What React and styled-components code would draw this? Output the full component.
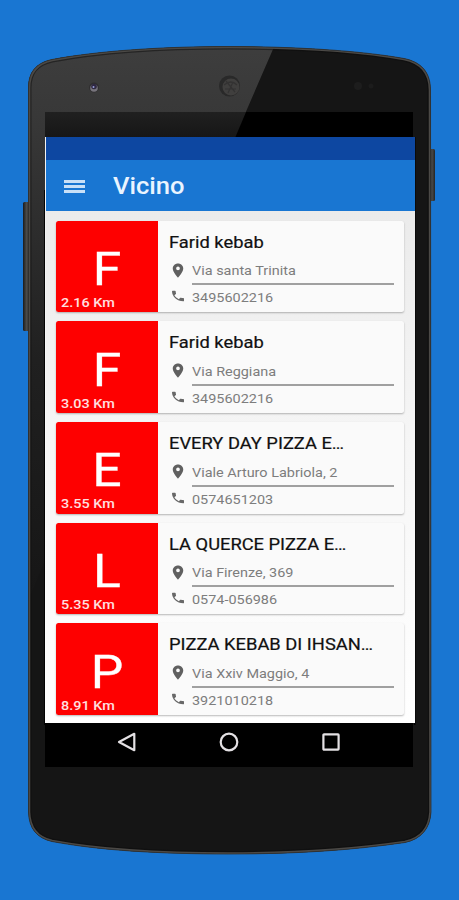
import React from 'react'
import styled, { createGlobalStyle } from 'styled-components'

const places = [
  { letter: 'F', distance: '2.16 Km', name: 'Farid kebab', address: 'Via santa Trinita', phone: '3495602216' },
  { letter: 'F', distance: '3.03 Km', name: 'Farid kebab', address: 'Via Reggiana', phone: '3495602216' },
  { letter: 'E', distance: '3.55 Km', name: 'EVERY DAY PIZZA E…', address: 'Viale Arturo Labriola, 2', phone: '0574651203' },
  { letter: 'L', distance: '5.35 Km', name: 'LA QUERCE PIZZA E…', address: 'Via Firenze, 369', phone: '0574-056986' },
  { letter: 'P', distance: '8.91 Km', name: 'PIZZA KEBAB DI IHSAN…', address: 'Via Xxiv Maggio, 4', phone: '3921010218' },
]

const bodyPath =
  'M28.5 88 C28.5 72 36 63 52 59.5 C100 50.5 165 46.5 229 46.5 C293 46.5 360 50.5 404 58.5 C421 62 430.5 72 430.5 90 L431 812 C430 829 421 839 405 842.5 C350 850.5 295 854 229 854 C160 854 100 850.5 52 841.5 C37 838 29 829 28.5 812 Z'

function PhoneBody() {
  return (
    <Body viewBox="0 0 459 900">
      <defs>
        <linearGradient id="glare" x1="0" y1="0" x2="0" y2="1">
          <stop offset="0" stopColor="#3e3e3e" />
          <stop offset="0.13" stopColor="#383838" />
          <stop offset="0.55" stopColor="#202020" />
          <stop offset="1" stopColor="#151515" />
        </linearGradient>
        <linearGradient id="slot" x1="0" y1="0" x2="0" y2="1">
          <stop offset="0" stopColor="#202020" />
          <stop offset="1" stopColor="#161616" />
        </linearGradient>
        <linearGradient id="key" x1="0" y1="0" x2="1" y2="0">
          <stop offset="0" stopColor="#181a1c" />
          <stop offset="0.5" stopColor="#4a4a48" />
          <stop offset="1" stopColor="#252525" />
        </linearGradient>
        <clipPath id="inside">
          <path d={bodyPath} />
        </clipPath>
      </defs>
      <rect x="23" y="202" width="7" height="129" rx="1.5" fill="url(#key)" />
      <rect x="429" y="149" width="6" height="52" rx="1.5" fill="url(#key)" />
      <path d={bodyPath} fill="#151515" />
      <g clipPath="url(#inside)">
        <path d="M20 40 H277 L235 137 L45 560 L20 620 Z" fill="url(#glare)" />
        <path d={bodyPath} fill="none" stroke="#0c0c0c" strokeWidth="6" opacity="0.5" />
        <path d={bodyPath} fill="none" stroke="#4b4946" strokeWidth="3.6" />
      </g>
      <path d={bodyPath} fill="none" stroke="#30302f" strokeWidth="0.8" />
      <rect x="45" y="112" width="368" height="26" fill="#000" />
      <path d="M45 112 H246 L235 138 H45 Z" fill="url(#slot)" />
      <rect x="44" y="190" width="1.5" height="535" fill="#030303" />
      <rect x="414" y="137" width="1.5" height="588" fill="#000" />
      {/* light sensor, earpiece and front camera */}
      <circle cx="94" cy="87.5" r="5" fill="#302f30" />
      <circle cx="94" cy="88" r="3.8" fill="#77747c" />
      <circle cx="94" cy="86.5" r="2.8" fill="#302942" />
      <circle cx="93.5" cy="87" r="1" fill="#9ba0dc" />
      <circle cx="229.5" cy="86" r="10.5" fill="#292929" />
      <circle cx="231" cy="87" r="8.5" fill="#403f3e" />
      <path d="M224 85 q7 -6 13 0 M225 89 h11 M228 93 l5 -11 M226 81 l9 11" stroke="#333232" strokeWidth="1.2" fill="none" />
      <circle cx="358" cy="86" r="4" fill="#1d1d1d" />
      <circle cx="371" cy="86" r="2.5" fill="#1c1c1c" />
    </Body>
  )
}

export default function App() {
  return (
    <>
      <GlobalStyle />
      <Stage>
        <PhoneBody />
        <Screen>
          <StatusBar />
          <AppBar>
            <MenuButton aria-label="Menu">
              <span />
              <span />
              <span />
            </MenuButton>
            <Title>Vicino</Title>
          </AppBar>
          <List>
            {places.map((place, i) => (
              <Card key={i}>
                <Thumb>
                  <Letter>{place.letter}</Letter>
                  <Distance>{place.distance}</Distance>
                </Thumb>
                <Info>
                  <Name>{place.name}</Name>
                  <AddressRow>
                    <PinIcon viewBox="0 0 24 24" preserveAspectRatio="none">
                      <path d="M12 2C8.13 2 5 5.13 5 9c0 5.25 7 13 7 13s7-7.75 7-13c0-3.87-3.13-7-7-7zm0 9.5a2.5 2.5 0 0 1 0-5 2.5 2.5 0 0 1 0 5z" />
                    </PinIcon>
                    <Detail>{place.address}</Detail>
                  </AddressRow>
                  <Divider />
                  <PhoneRow>
                    <CallIcon viewBox="0 0 24 24" preserveAspectRatio="none">
                      <path d="M6.62 10.79c1.44 2.83 3.76 5.14 6.59 6.59l2.2-2.2c.27-.27.67-.36 1.02-.24 1.12.37 2.33.57 3.57.57.55 0 1 .45 1 1V20c0 .55-.45 1-1 1-9.39 0-17-7.61-17-17 0-.55.45-1 1-1h3.5c.55 0 1 .45 1 1 0 1.25.2 2.45.57 3.57.11.35.03.74-.25 1.02l-2.2 2.2z" />
                    </CallIcon>
                    <Detail>{place.phone}</Detail>
                  </PhoneRow>
                </Info>
              </Card>
            ))}
          </List>
        </Screen>
        <NavBar>
          <NavIcon viewBox="0 0 20 20">
            <path d="M17.3 1.8V18.2L2 10Z" />
          </NavIcon>
          <NavIcon viewBox="0 0 20 20">
            <circle cx="10" cy="10" r="8.3" />
          </NavIcon>
          <NavIcon viewBox="0 0 20 20">
            <rect x="2.4" y="2.4" width="15.2" height="15.2" rx="0.6" />
          </NavIcon>
        </NavBar>
      </Stage>
    </>
  )
}

const GlobalStyle = createGlobalStyle`
  * {
    box-sizing: border-box;
  }

  body {
    margin: 0;
    background: #1976d2;
    font-family: Roboto, "Liberation Sans", sans-serif;
  }
`

const Stage = styled.div`
  position: relative;
  width: 459px;
  height: 900px;
  padding: 137px 44.5px 0 45px;
  background: #1976d2;
  overflow: hidden;
`

const Body = styled.svg`
  position: absolute;
  top: 0;
  left: 0;
  width: 459px;
  height: 900px;
`

const Screen = styled.div`
  position: relative;
  display: flex;
  flex-direction: column;
  height: 586px;
  border-left: 1px solid rgba(255, 255, 255, 0.35);
  background: linear-gradient(#ebebeb 74px, #f5f5f5 50%, #fff);
`

const StatusBar = styled.div`
  height: 23px;
  background: #0d47a1;
`

const AppBar = styled.header`
  display: flex;
  align-items: center;
  height: 51px;
  padding: 2px 0 0 18px;
  background: #1976d2;
`

const MenuButton = styled.button`
  display: flex;
  flex-direction: column;
  gap: 2.6px;
  width: 21px;
  margin: 0 28px 0 0;
  padding: 0;
  border: none;
  background: none;

  span {
    height: 2.4px;
    background: #c9e0f7;
  }
`

/* the type is a little wider than it is tall, like the rest of the display */
const Wide = styled.span`
  display: block;
  white-space: nowrap;
  transform: scaleX(1.11);
  transform-origin: left center;
`

const Title = styled(Wide).attrs({ as: 'h1' })`
  margin: 1px 0 0;
  font-size: 23px;
  font-weight: 500;
  line-height: 26px;
  color: #eaf4ff;
`

const List = styled.main`
  display: flex;
  flex-direction: column;
  gap: 9px;
  padding: 9.5px 10.5px 0 10px;
`

const Card = styled.article`
  display: flex;
  height: 91.7px;
  border-radius: 2.5px;
  background: #fafafa;
  box-shadow: 0 1px 2px rgba(0, 0, 0, 0.28);
  overflow: hidden;
`

const Thumb = styled.div`
  display: flex;
  flex-direction: column;
  justify-content: flex-end;
  width: 102px;
  height: 100%;
  padding: 0 5px 2.2px;
  background: #fe0000;
  color: #fff;
`

const Letter = styled.div`
  font-size: 47px;
  line-height: 47px;
  text-align: center;
  margin-bottom: 3px;
  transform: scaleX(1.1);
  -webkit-text-stroke: 0.3px #fff;
`

const Distance = styled(Wide)`
  font-size: 13px;
  line-height: 15px;
  font-weight: 500;
  color: #ffe0e0;
`

const Info = styled.div`
  flex: 1;
  padding: 11.2px 10px 0 11px;
`

const Name = styled(Wide).attrs({ as: 'h2' })`
  margin: 0;
  font-size: 16.5px;
  line-height: 21px;
  font-weight: 400;
  color: #111;
  -webkit-text-stroke: 0.2px #111;
`

const Row = styled.div`
  display: flex;
  align-items: center;
  height: 18px;
`

const AddressRow = styled(Row)`
  margin-top: 9px;
`

const PhoneRow = styled(Row)`
  margin-top: 3.5px;
`

const PinIcon = styled.svg`
  width: 18px;
  height: 17px;
  margin: -1px 5px 0 0;
  fill: #606060;
`

const CallIcon = styled.svg`
  width: 16px;
  height: 14px;
  margin: -3px 6px 0 1px;
  fill: #686868;
`

const Detail = styled(Wide)`
  font-size: 13px;
  line-height: 17px;
  color: #7d7d7d;
`

const Divider = styled.div`
  height: 2px;
  margin: 3.5px 0 0 23px;
  background: #a0a0a0;
`

const NavBar = styled.nav`
  position: relative;
  display: flex;
  justify-content: center;
  gap: 82px;
  width: 368px;
  height: 44px;
  padding-top: 9.3px;
  background: #000;
`

const NavIcon = styled.svg`
  width: 20px;
  height: 20px;
  fill: none;
  stroke: #e4e1e4;
  stroke-width: 2.2;
  stroke-linejoin: round;
`
